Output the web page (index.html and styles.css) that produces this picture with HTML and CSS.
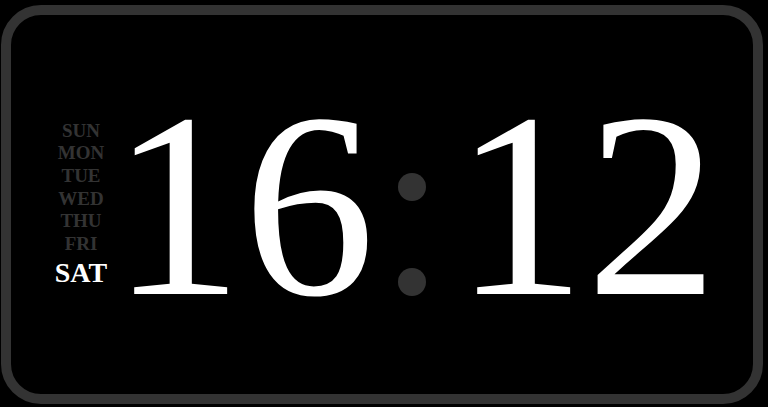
FILE: index.html
```html
<!DOCTYPE html>
<html lang="en">
<head>
<meta charset="utf-8">
<title>Clock</title>
<link rel="stylesheet" href="styles.css">
</head>
<body>
<div class="clock">
  <ul class="days">
    <li class="day">SUN</li>
    <li class="day">MON</li>
    <li class="day">TUE</li>
    <li class="day">WED</li>
    <li class="day">THU</li>
    <li class="day">FRI</li>
    <li class="day day-active">SAT</li>
  </ul>
  <div class="digits hours">16</div>
  <div class="colon"><span class="dot"></span><span class="dot"></span></div>
  <div class="digits minutes">12</div>
</div>
</body>
</html>
```
FILE: styles.css
```css
html, body {
  margin: 0;
  padding: 0;
  background: #000;
}
body {
  width: 768px;
  height: 407px;
  overflow: hidden;
}
.clock {
  box-sizing: border-box;
  width: 762px;
  height: 399px;
  margin: 5px 0 0 1px;
  border: 10px solid #333;
  border-radius: 40px;
  background: #000;
  display: flex;
  align-items: center;
  padding-left: 40px;
}
.days {
  list-style: none;
  margin: 0;
  padding: 0;
  width: 60px;
  text-align: center;
  font-family: "Liberation Serif", "Times New Roman", serif;
  font-weight: bold;
  font-size: 19px;
  line-height: 22.6px;
  color: #333;
}
.day-active {
  color: #fff;
  font-size: 28px;
  line-height: 32px;
  margin-top: 2px;
}
.digits {
  font-family: "Liberation Serif", "Times New Roman", serif;
  font-size: 264px;
  line-height: 1;
  color: #fff;
}
.colon {
  display: flex;
  flex-direction: column;
  gap: 67px;
  margin: 59px 28px 0 23px;
}
.dot {
  display: block;
  width: 28px;
  height: 28px;
  border-radius: 50%;
  background: #333;
}
```
